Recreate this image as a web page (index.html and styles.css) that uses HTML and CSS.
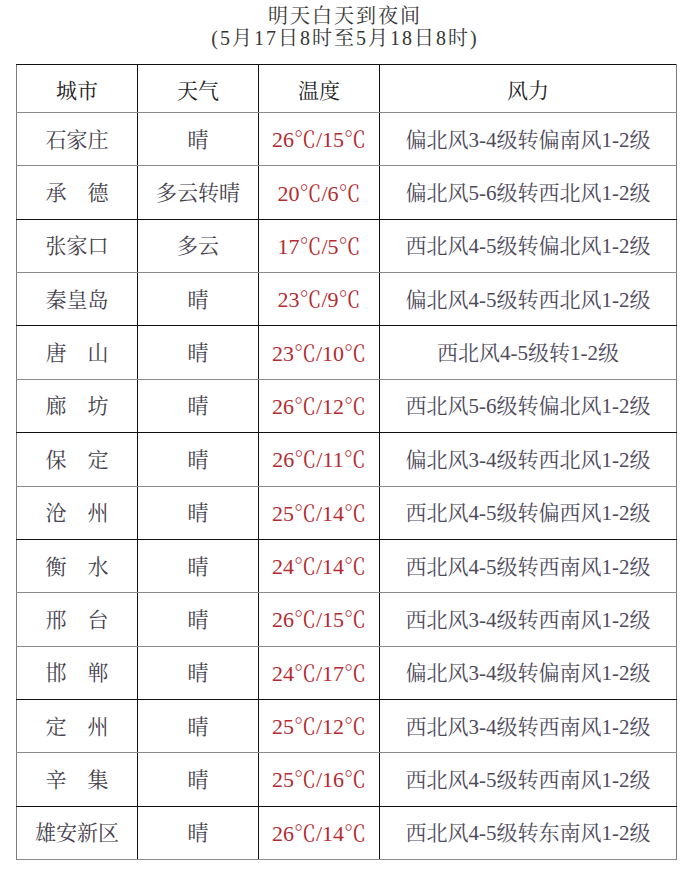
FILE: index.html
```html
<!DOCTYPE html>
<html lang="zh-CN">
<head>
<meta charset="utf-8">
<link rel="stylesheet" href="styles.css">
</head>
<body>
<div class="page">
  <div class="title">
    <div class="t1">明天白天到夜间</div>
    <div class="t2">(5月17日8时至5月18日8时)</div>
  </div>
  <table class="wx">
    <colgroup><col class="c1"><col class="c2"><col class="c3"><col class="c4"></colgroup>
    <thead>
      <tr class="head"><th>城市</th><th>天气</th><th>温度</th><th>风力</th></tr>
    </thead>
    <tbody>
      <tr><td>石家庄</td><td>晴</td><td class="temp">26℃/15℃</td><td class="wind">偏北风3-4级转偏南风1-2级</td></tr>
      <tr class="dk"><td>承　德</td><td>多云转晴</td><td class="temp">20℃/6℃</td><td class="wind">偏北风5-6级转西北风1-2级</td></tr>
      <tr><td>张家口</td><td>多云</td><td class="temp">17℃/5℃</td><td class="wind">西北风4-5级转偏北风1-2级</td></tr>
      <tr class="dk"><td>秦皇岛</td><td>晴</td><td class="temp">23℃/9℃</td><td class="wind">偏北风4-5级转西北风1-2级</td></tr>
      <tr><td>唐　山</td><td>晴</td><td class="temp">23℃/10℃</td><td class="wind">西北风4-5级转1-2级</td></tr>
      <tr class="dk"><td>廊　坊</td><td>晴</td><td class="temp">26℃/12℃</td><td class="wind">西北风5-6级转偏北风1-2级</td></tr>
      <tr><td>保　定</td><td>晴</td><td class="temp">26℃/11℃</td><td class="wind">偏北风3-4级转西北风1-2级</td></tr>
      <tr class="dk"><td>沧　州</td><td>晴</td><td class="temp">25℃/14℃</td><td class="wind">西北风4-5级转偏西风1-2级</td></tr>
      <tr><td>衡　水</td><td>晴</td><td class="temp">24℃/14℃</td><td class="wind">西北风4-5级转西南风1-2级</td></tr>
      <tr><td>邢　台</td><td>晴</td><td class="temp">26℃/15℃</td><td class="wind">西北风3-4级转西南风1-2级</td></tr>
      <tr class="dk"><td>邯　郸</td><td>晴</td><td class="temp">24℃/17℃</td><td class="wind">偏北风3-4级转偏南风1-2级</td></tr>
      <tr><td>定　州</td><td>晴</td><td class="temp">25℃/12℃</td><td class="wind">西北风3-4级转西南风1-2级</td></tr>
      <tr class="dk"><td>辛　集</td><td>晴</td><td class="temp">25℃/16℃</td><td class="wind">西北风4-5级转西南风1-2级</td></tr>
      <tr><td>雄安新区</td><td>晴</td><td class="temp">26℃/14℃</td><td class="wind">西北风4-5级转东南风1-2级</td></tr>
    </tbody>
  </table>
</div>
</body>
</html>
```

FILE: styles.css
```css
html, body {
  margin: 0;
  padding: 0;
  background: #ffffff;
}

body {
  font-family: "Liberation Serif", "Noto Serif CJK SC", "Noto Sans CJK SC", serif;
  color: #45414d;
}

.page {
  width: 690px;
  padding-top: 5px;
}

.title {
  text-align: center;
  color: #363636;
  font-size: 20px;
  line-height: 22px;
  height: 59px;
}

.t1 {
  letter-spacing: 2px;
}

.t2 {
  letter-spacing: 2px;
}

.wx {
  margin-left: 16px;
  width: 661px;
  border-collapse: collapse;
  table-layout: fixed;
  font-size: 21px;
}

.c1, .c2, .c3 { width: 121px; }
.c4 { width: 297px; }

.wx th, .wx td {
  padding: 0;
  text-align: center;
  vertical-align: middle;
  border-right: 1px solid #111111;
  border-bottom: 1px solid #8a8a8a;
  white-space: nowrap;
  overflow: visible;
}

.wx th:first-child, .wx td:first-child {
  border-left: 1px solid #7d7d7d;
}

.wx th:last-child, .wx td:last-child {
  border-right: 1px solid #7d7d7d;
}

.head th {
  height: 47px;
  font-weight: normal;
  color: #222222;
  border-top: 1px solid #111111;
}

.wx tbody tr {
  height: 53.36px;
}

.wx tbody td {
  padding-bottom: 3px;
}

.wx tr.dk td {
  border-bottom-color: #111111;
}

.temp {
  color: #b62a30;
  font-size: 22px;
  font-family: "Liberation Serif", "Noto Serif CJK SC", serif;
}

.wind {
  color: #4e4a5c;
}
```
